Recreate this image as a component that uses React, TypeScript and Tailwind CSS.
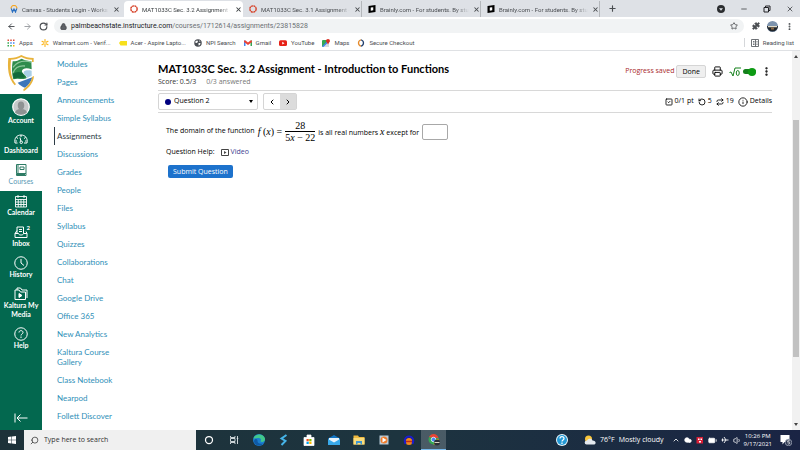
import type { ReactNode } from 'react';
import {
  ArrowLeft,
  ArrowRight,
  BatteryFull,
  ChevronLeft,
  ChevronRight,
  ChevronUp,
  Cloud,
  Info,
  Lock,
  Minus,
  MoreVertical,
  Plus,
  Printer,
  Puzzle,
  Repeat,
  RotateCcw,
  RotateCw,
  Search,
  SquareCheck,
  Star,
  Volume1,
  X,
} from 'lucide-react';

const tabs = [
  { title: 'Canvas - Students Login - Works', icon: 'workday' },
  { title: 'MAT1033C Sec. 3.2 Assignment -', icon: 'canvas', active: true },
  { title: 'MAT1033C Sec. 3.1 Assignment -', icon: 'canvas' },
  { title: 'Brainly.com - For students. By stu', icon: 'brainly' },
  { title: 'Brainly.com - For students. By stu', icon: 'brainly' },
];

const courseLinks = [
  'Modules',
  'Pages',
  'Announcements',
  'Simple Syllabus',
  'Assignments',
  'Discussions',
  'Grades',
  'People',
  'Files',
  'Syllabus',
  'Quizzes',
  'Collaborations',
  'Chat',
  'Google Drive',
  'Office 365',
  'New Analytics',
  'Kaltura Course Gallery',
  'Class Notebook',
  'Nearpod',
  'Follett Discover',
];

function TabIcon({ name }: { name: string }) {
  if (name === 'workday') {
    return (
      <svg viewBox="0 0 16 16" className="size-2 shrink-0" fill="none">
        <path d="M2 7a6 6 0 0 1 12 0" stroke="#f5a623" strokeWidth="2.4" />
        <path d="M2.5 7l2.5 7 3-6 3 6 2.5-7" stroke="#2a6fc0" strokeWidth="2.4" />
      </svg>
    );
  }
  if (name === 'canvas') {
    return (
      <svg viewBox="0 0 16 16" className="size-2 shrink-0" fill="none">
        <circle cx="8" cy="8" r="6.3" stroke="#d64027" strokeWidth="2.8" strokeDasharray="4.15 0.8" />
      </svg>
    );
  }
  return (
    <svg viewBox="0 0 16 16" className="size-2 shrink-0">
      <path d="M1 2l14-2v14L1 16z" fill="#000" />
      <path d="M5.5 5.2l5-.7v6.2l-5 .7z" fill="#fff" />
    </svg>
  );
}

function TabStrip() {
  return (
    <div className="flex h-[17px] items-end bg-[#dee1e6] text-[6px] text-[#4a4d51]">
      {tabs.map((tab, i) => (
        <div
          key={i}
          className={
            tab.active
              ? 'flex h-4 w-[119px] items-center gap-1 rounded-t bg-white pr-1 pl-1.5 text-[#3c4043]'
              : i === 0
                ? 'flex h-4 w-[124px] items-center gap-1 pr-1 pl-2.5'
                : 'flex h-4 w-[119px] items-center gap-1 pr-1 pl-1.5 shadow-[inset_-1px_0_0_#b4b7bb]'
          }
        >
          <TabIcon name={tab.icon} />
          <span className="flex-1 mask-r-from-85% whitespace-nowrap">{tab.title}</span>
          <button aria-label="Close tab" className="shrink-0">
            <X className="size-[7px]" strokeWidth={3.5} />
          </button>
        </div>
      ))}
      <button aria-label="New tab" className="mb-1 ml-2">
        <Plus className="size-[9px]" strokeWidth={3} />
      </button>
      <div className="ml-auto flex h-4 items-center gap-[15px] pr-1.5 text-[#202124]">
        <svg viewBox="0 0 16 16" className="size-2">
          <circle cx="8" cy="8" r="8" fill="#2b2d30" />
          <path d="M4 6.5h8l-4 5z" fill="#dee1e6" />
        </svg>
        <button aria-label="Minimize">
          <Minus className="size-2" />
        </button>
        <button aria-label="Restore">
          <svg viewBox="0 0 16 16" className="size-2" fill="none" stroke="currentColor" strokeWidth="2">
            <path d="M2 5h9v9H2zM5 5V2h9v9h-3" />
          </svg>
        </button>
        <button aria-label="Close window">
          <X className="size-2" />
        </button>
      </div>
    </div>
  );
}

function AddressBar() {
  return (
    <div className="flex h-[18px] items-center bg-white pr-1.5 pl-[7px] text-[#4a4d51]">
      <div className="flex items-center gap-[7px]">
        <button aria-label="Back">
          <ArrowLeft className="size-[9px]" strokeWidth={2.5} />
        </button>
        <button aria-label="Forward" className="text-[#9a9da1]">
          <ArrowRight className="size-[9px]" strokeWidth={2.5} />
        </button>
        <button aria-label="Reload">
          <RotateCw className="size-[9px]" strokeWidth={3} />
        </button>
      </div>
      <div className="ml-1.5 flex h-[14px] flex-1 items-center gap-1 rounded-full bg-[#f1f3f4] px-1.5">
        <Lock className="size-[7px] fill-[#5f6368]" strokeWidth={3} />
        <span className="flex-1 text-[7px] text-[#6b6f73]">
          <span className="text-[#202124]">palmbeachstate.instructure.com</span>/courses/1712614/assignments/23815828
        </span>
        <Star className="size-2" strokeWidth={2.5} />
      </div>
      <div className="ml-2 flex items-center gap-[7px]">
        <Puzzle className="size-2 fill-[#4a4d51]" />
        <svg viewBox="0 0 22 22" className="size-[11px]">
          <circle cx="11" cy="11" r="11" fill="#7d93ad" />
          <path d="M0 10h22a11 11 0 0 1-22 0z" fill="#20262c" />
          <path d="M2 10h18v2.5H2z" fill="#e1dcc9" />
          <path d="M8 13h6v4H8z" fill="#8a6a48" />
        </svg>
        <MoreVertical className="size-[9px]" strokeWidth={3} />
      </div>
    </div>
  );
}

function Bookmark({ label, children }: { label: string; children: ReactNode }) {
  return (
    <a href="#" className="flex items-center gap-1 whitespace-nowrap">
      <svg viewBox="0 0 16 16" className="size-2 shrink-0">
        {children}
      </svg>
      {label}
    </a>
  );
}

function BookmarksBar() {
  return (
    <div className="flex h-4 items-center gap-2 border-b border-[#dfe1e4] bg-white pr-1.5 pl-[7px] text-[6px] text-[#4a4d51]">
      <Bookmark label="Apps">
        <path d="M1 1h3v3H1zM6.500 1h3v3h-3zM12 1h3v3h-3z" fill="#dd4b39" />
        <path d="M1 6.500h3v3H1z" fill="#34a853" />
        <path d="M6.500 6.500h3v3h-3zM12 6.500h3v3h-3z" fill="#4285f4" />
        <path d="M1 12h3v3H1zM6.500 12h3v3h-3z" fill="#34a853" />
        <path d="M12 12h3v3h-3z" fill="#f5b400" />
      </Bookmark>
      <Bookmark label="Walmart.com - Verif...">
        <path
          d="M8 1v4.500M8 10.500V15M2 4.500l3.800 2.200M10.200 9.300l3.800 2.200M2 11.500l3.800-2.200M10.200 6.700L14 4.500"
          stroke="#fbb51b"
          strokeWidth="2.2"
          strokeLinecap="round"
        />
      </Bookmark>
      <Bookmark label="Acer - Aspire Lapto...">
        <path d="M0 8l3-4h13v9H3z" fill="#f7e01c" />
      </Bookmark>
      <Bookmark label="NPI Search">
        <circle cx="8" cy="8" r="7.5" fill="#4a4e54" />
        <path d="M3 4l4-1 1 3-3 2-2 0zM9 8l4 0-1 4-3 1zM10 2.500l3 2-2 1z" fill="#fff" />
      </Bookmark>
      <Bookmark label="Gmail">
        <path d="M0 3h3v11H0z" fill="#4285f4" />
        <path d="M13 3h3v11h-3z" fill="#34a853" />
        <path d="M0 3h3l5 4 5-4h3v3l-8 6-8-6z" fill="#ea4335" />
      </Bookmark>
      <Bookmark label="YouTube">
        <rect y="2.5" width="16" height="11.5" rx="3" fill="#e62117" />
        <path d="M6.500 5.500v5.500l4.500-2.750z" fill="#fff" />
      </Bookmark>
      <Bookmark label="Maps">
        <rect x="0" y="2" width="14" height="14" rx="2" fill="#34a853" />
        <path d="M1 16L14 5v11z" fill="#d5dbe0" />
        <path d="M0 15L12 3l2 2L3 16z" fill="#4285f4" />
        <path d="M12 0a4 4 0 0 1 4 4c0 2.500-3 3.500-4 7-1-3.500-4-4.500-4-7a4 4 0 0 1 4-4z" fill="#d93025" />
      </Bookmark>
      <Bookmark label="Secure Checkout">
        <path d="M8 1.500C4 3 3 5.500 3 8s1 5 5 6.500" fill="none" stroke="#e58a2b" strokeWidth="2.6" />
        <path d="M8 1.500c4 1.500 5 4 5 6.500s-1 5-5 6.500" fill="none" stroke="#23406e" strokeWidth="2.6" />
      </Bookmark>
      <a href="#" className="ml-auto flex items-center gap-1 border-l border-[#d5d7da] pl-1.5">
        <svg viewBox="0 0 16 16" className="size-2" fill="none" stroke="#5f6368" strokeWidth="1.8">
          <path d="M1 1h14v14H1zM4 5h3M4 8h3M4 11h3M9 1v14M11 5h2M11 8h2M11 11h2" />
        </svg>
        Reading list
      </a>
    </div>
  );
}

function NavItem({ label, active, children }: { label: string; active?: boolean; children: ReactNode }) {
  return (
    <a
      href="#"
      className={
        active
          ? 'flex flex-col items-center bg-white pt-[3px] pb-[5px] text-center text-[#5a9ab5]'
          : 'flex flex-col items-center pt-[3px] pb-[5px] text-center font-bold text-white'
      }
    >
      <svg
        viewBox="0 0 28 28"
        className={active ? 'size-[14px] text-[#2d7b64]' : 'size-[14px]'}
        fill="none"
        stroke="currentColor"
        strokeWidth="2"
      >
        {children}
      </svg>
      {label}
    </a>
  );
}

function GlobalNav() {
  return (
    <nav className="flex w-[42px] shrink-0 flex-col bg-[#03684f] text-[7px] leading-[9px]">
      <div className="flex h-[43px] items-center justify-center bg-white">
        <svg viewBox="0 0 84 114" className="h-[38px] w-7">
          <path
            d="M4 12c14 1 28-2 39-9 10 6 22 9 37 9v12h-5v-7c-12 0-23-3-32-8-9 5-20 8-31 8-3 30-1 54 15 74l-4 3C3 72 1 42 4 12z"
            fill="#e8b33b"
          />
          <path d="M17 22c10 0 19-3 27-8 9 5 18 7 29 8l1 24c-14-6-27-4-29 4-2 9 14 12 14 22-12 8-22-2-40 4C14 60 14 40 17 22z" fill="#2e8c4c" />
          <path d="M18 40c12-16 32-22 55-16M18 56c6-14 20-22 36-20" fill="none" stroke="#8cc79a" strokeWidth="4" />
          <path d="M18 60c8-7 18-8 28-4l8 14c-10 4-22-2-34 4z" fill="#116a3b" />
          <path d="M50 54c2-5 12-6 24-4v16c-6 2-12 4-12 8 0-8-14-12-12-20z" fill="#a9cfe6" />
          <path d="M32 86l44-16c-3 14-12 24-22 31-8-3-16-8-22-15z" fill="#3c76ba" />
          <path d="M81 66c-2 20-14 35-31 46l-1-6c14-10 24-23 27-38z" fill="#e8b33b" />
        </svg>
      </div>
      <a href="#" className="flex flex-col items-center pt-1 pb-1 font-bold text-white">
        <svg viewBox="0 0 36 36" className="size-[18px]">
          <circle cx="18" cy="18" r="16.5" fill="#c6c9ca" stroke="#fff" strokeWidth="2.5" />
          <ellipse cx="18" cy="15" rx="6.5" ry="8" fill="#8e9293" />
          <path d="M6 29c2-6 7-7 12-7s10 1 12 7c-7 6-17 6-24 0z" fill="#8e9293" />
        </svg>
        Account
      </a>
      <NavItem label="Dashboard">
        <path d="M7 22H2C0 12 6 6 14 6s14 6 12 16h-6M14 6v4M5 11l3 2M23 11l-3 2M3 18h3M25 18h-3" />
        <path d="M12 11l2 8" />
        <circle cx="14.5" cy="20.5" r="2.5" />
      </NavItem>
      <NavItem label="Courses" active>
        <path d="M5 3h19v18H5zM5 21v4h19M24 21v4M8 3v18M12 8h8v5h-8zM6 23h16" />
      </NavItem>
      <NavItem label="Calendar">
        <path d="M3 5h22v21H3zM3 11h22M8 2v6M20 2v6M3 16h22M3 21h22M8.500 11v15M14 11v15M19.500 11v15" strokeWidth="1.8" />
      </NavItem>
      <div className="relative">
        <NavItem label="Inbox">
          <path d="M6 17V4h13v13M2 17h7c0 4 10 4 10 0h7v8H2zM2 17l4-6M26 17l-2-4M10 9h6M10 13h6" />
        </NavItem>
        <span className="absolute top-0.5 right-3 text-[6px] leading-[8px] font-bold text-white">2</span>
      </div>
      <NavItem label="History">
        <circle cx="14" cy="14" r="12.5" />
        <path d="M14 6v8l6 5" />
      </NavItem>
      <NavItem label="Kaltura My Media">
        <path d="M2 25V6h8l3 4h10v15zM6 6V2h7l3 4h10v16" />
        <path d="M10 13l6 4-6 4z" fill="currentColor" />
      </NavItem>
      <NavItem label="Help">
        <circle cx="14" cy="14" r="12.5" />
        <path d="M10 11c0-5 8-5 8 0 0 3-4 3-4 6M14 19v3" />
      </NavItem>
      <button aria-label="Collapse navigation" className="mx-auto mt-auto mb-[7px] text-white">
        <svg viewBox="0 0 28 20" className="h-[10px] w-[14px]" fill="none" stroke="currentColor" strokeWidth="2">
          <path d="M2 1v18M27 10H6M13 3l-7 7 7 7" />
        </svg>
      </button>
    </nav>
  );
}

function CourseNav() {
  return (
    <nav className="w-[100px] shrink-0 pt-1 pl-3 text-[8px] leading-[10px] text-[#2f8fb8]">
      <ul>
        {courseLinks.map((link) => (
          <li key={link}>
            <a
              href="#"
              className={
                link === 'Assignments'
                  ? 'block border-l border-[#2d3b45] py-1 pr-6 pl-0.5 text-[#2d3b45]'
                  : 'block border-l border-transparent py-1 pr-6 pl-0.5'
              }
            >
              {link}
            </a>
          </li>
        ))}
      </ul>
    </nav>
  );
}

function Assignment() {
  return (
    <main className="min-w-0 flex-1 pt-3 pr-5 pl-4 font-['Open_Sans',sans-serif] text-[7px] text-[#333]">
      <div className="flex items-start justify-between">
        <div>
          <h1 className="font-['Lato',sans-serif] text-[11px] leading-3 font-bold text-black">
            MAT1033C Sec. 3.2 Assignment - Introduction to Functions
          </h1>
          <p className="flex gap-2.5 leading-[13px]">
            <span>Score: 0.5/3</span>
            <span className="text-[#777]">0/3 answered</span>
          </p>
        </div>
        <div className="flex items-center pt-0.5">
          <span className="text-[#a8282c]">Progress saved</span>
          <button className="ml-0.5 h-[13px] rounded-xs border border-[#d5d5d5] bg-[#efefef] px-[5px] leading-[10px] text-black">
            Done
          </button>
          <button aria-label="Print" className="ml-1.5 text-black">
            <Printer className="size-[11px]" />
          </button>
          <label className="ml-1.5 flex items-center text-[#14801b]">
            <svg viewBox="0 0 24 20" className="h-[10px] w-3" fill="none" stroke="currentColor" strokeWidth="2">
              <path d="M1 11l3-1 4 8L12 2h12" />
              <ellipse cx="17.5" cy="12" rx="3" ry="5" />
            </svg>
            <input type="checkbox" defaultChecked aria-label="Equation editor" className="peer sr-only" />
            <span className="ml-0.5 flex h-[5px] w-[13px] items-center justify-end rounded-full bg-[#14801b]">
              <span className="size-2 shrink-0 rounded-full bg-[#0d9b14]" />
            </span>
          </label>
          <button aria-label="More options" className="ml-[5px] text-black">
            <MoreVertical className="size-[11px]" strokeWidth={3} />
          </button>
        </div>
      </div>

      {/* Question picker */}
      <div className="mt-0.5 flex h-[23px] items-center justify-between border-y border-[#d8d8d8]">
        <div className="flex items-center gap-[5px]">
          <div className="relative">
            <select
              aria-label="Question"
              className="h-[17px] w-[100px] appearance-none rounded-xs border border-[#d5d5d5] bg-white pl-[15px] text-[7px] text-black"
            >
              <option>Question 2</option>
            </select>
            <span className="pointer-events-none absolute inset-0 flex items-center justify-between pr-[5px] pl-[7px]">
              <span className="size-1.5 rounded-full bg-[#00007f]" />
              <svg viewBox="0 0 8 6" className="h-[3px] w-1">
                <path d="M0 0h8L4 6z" fill="#000" />
              </svg>
            </span>
          </div>
          <div className="flex h-[17px] rounded-xs border border-[#d5d5d5] text-black">
            <button aria-label="Previous question" className="flex w-4 items-center justify-center">
              <ChevronLeft className="size-2" strokeWidth={3} />
            </button>
            <button aria-label="Next question" className="flex w-4 items-center justify-center bg-[#dcdcdc]">
              <ChevronRight className="size-2" strokeWidth={3} />
            </button>
          </div>
        </div>
        <div className="flex items-center gap-1 text-black">
          <span className="flex items-center gap-0.5">
            <SquareCheck className="size-2" strokeWidth={2.5} />
            0/1 pt
          </span>
          <span className="flex items-center gap-0.5">
            <RotateCcw className="size-2" strokeWidth={2.5} />5
          </span>
          <span className="flex items-center gap-0.5">
            <Repeat className="size-2" strokeWidth={2.5} />
            19
          </span>
          <button className="flex items-center gap-0.5">
            <Info className="size-[10px]" strokeWidth={2} />
            Details
          </button>
        </div>
      </div>

      {/* Question */}
      <div className="flex flex-col items-start px-2 pt-[7px] text-black">
        <label className="flex items-center gap-[3px]">
          The domain of the function
          <span className="flex items-center gap-[3px] font-['Liberation_Serif',serif] text-[10px]">
            <span>
              <i>f</i> (<i>x</i>) =
            </span>
            <span className="flex flex-col text-center leading-[11px]">
              <span>28</span>
              <span className="border-t border-black whitespace-nowrap">
                5<i>x</i> − 22
              </span>
            </span>
          </span>
          <span>
            is all real numbers <i className="font-['Liberation_Serif',serif] text-[10px]">x</i> except for
          </span>
          <input type="text" className="h-4 w-[26px] rounded-xs border border-[#a8a8a8] px-0.5" />
        </label>
        <p className="mt-1 flex items-center leading-[10px]">
          Question Help:
          <a href="#" className="ml-1.5 flex items-center gap-0.5 text-[#404090]">
            <svg viewBox="0 0 16 14" className="h-[7px] w-2" fill="none" stroke="#444" strokeWidth="2">
              <path d="M1 1h14v12H1z" />
              <path d="M6 4v6l5-3z" fill="#444" stroke="none" />
            </svg>
            Video
          </a>
        </p>
        <button className="mt-2 ml-0.5 h-[13px] rounded-xs bg-[#1d72cc] px-[5px] text-[7px] leading-[13px] text-white">
          Submit Question
        </button>
      </div>
    </main>
  );
}

function Scrollbar() {
  return (
    <div className="flex w-2 shrink-0 flex-col items-center bg-[#f1f1f1] py-1">
      <svg viewBox="0 0 8 6" className="h-[3px] w-1">
        <path d="M0 6h8L4 0z" fill="#444" />
      </svg>
      <div className="flex w-1.5 flex-1 flex-col">
        <div className="flex-[17%]" />
        <div className="flex-[65%] bg-[#c1c1c1]" />
        <div className="flex-[18%]" />
      </div>
      <svg viewBox="0 0 8 6" className="h-[3px] w-1">
        <path d="M0 0h8L4 6z" fill="#444" />
      </svg>
    </div>
  );
}

function AppButton({ label, active, children }: { label: string; active?: boolean; children: ReactNode }) {
  return (
    <button
      aria-label={label}
      className={
        active
          ? 'flex h-5 w-[25px] items-center justify-center border-b border-[#76b9ed] bg-white/20'
          : 'flex h-5 w-[25px] items-center justify-center'
      }
    >
      <svg viewBox="0 0 24 24" className="size-3">
        {children}
      </svg>
    </button>
  );
}

function Taskbar() {
  return (
    <footer className="flex h-5 shrink-0 items-center bg-linear-to-r from-[#1d3239] via-[#1d343f] to-[#1a2444] text-[7px] text-white">
      <button aria-label="Start" className="flex w-6 justify-center">
        <svg viewBox="0 0 16 16" className="size-2" fill="#fff">
          <path d="M0 2l7-1v6.500H0zM8 1l8-1v7.500H8zM0 8.500h7V15l-7-1zM8 8.500h8V16l-8-1z" />
        </svg>
      </button>
      <label className="flex h-5 w-[172px] items-center gap-[5px] bg-[#f0f0f0] px-1.5 text-[#333]">
        <Search className="size-[9px] -scale-x-100" />
        <input
          type="text"
          aria-label="Search"
          placeholder="Type here to search"
          className="min-w-0 flex-1 text-[7px] placeholder:text-[#333]"
        />
      </label>
      <div className="flex items-center">
        <AppButton label="Cortana">
          <circle cx="12" cy="12" r="7" fill="none" stroke="#fff" strokeWidth="2.5" />
        </AppButton>
        <AppButton label="Task view">
          <path d="M5 4v3h9V4M5 20v-3h9v3M5 9h9v6H5zM19 4v16M17.500 9h3" fill="none" stroke="#dfe5e8" strokeWidth="1.8" />
        </AppButton>
        <AppButton label="Edge">
          <circle cx="12" cy="12" r="12" fill="#1b7fd0" />
          <path d="M1 9C4-2 21-2 24 9c1 6-5 8-9 6 3-5-1-8-5-7-4 0-7 1-9 1z" fill="#41c88c" />
          <path d="M9 12c-1 6 4 9 11 7-5 7-17 5-18-5 2-5 5-5 7-2z" fill="#0f5aa6" />
        </AppButton>
        <AppButton label="Stream">
          <path d="M17 2L7 9l8 5-8 8" fill="none" stroke="#46b4e8" strokeWidth="4" />
        </AppButton>
        <AppButton label="Store">
          <path d="M2 7h20v16H2zM8 7V2h8v5" fill="#fff" stroke="#fff" strokeWidth="1.5" />
          <path d="M7 10h4.500v4.500H7z" fill="#f25022" />
          <path d="M12.500 10H17v4.500h-4.500z" fill="#7fba00" />
          <path d="M7 15.500h4.500V20H7z" fill="#00a4ef" />
          <path d="M12.500 15.500H17V20h-4.500z" fill="#ffb900" />
        </AppButton>
        <AppButton label="Mail">
          <path d="M0 9l12-7 12 7v13H0z" fill="#1275c4" />
          <path d="M2 8h20v6l-10 5L2 14z" fill="#e8f4fc" />
          <path d="M0 10l12 7 12-7v12H0z" fill="#38a9ea" />
        </AppButton>
        <AppButton label="File Explorer">
          <path d="M1 3h9l2 3h11v15H1z" fill="#f0b93f" />
          <path d="M1 8h22v13H1z" fill="#fbdc7a" />
          <path d="M6 14h12v7h-3v-3H9v3H6z" fill="#3f97d3" />
        </AppButton>
        <AppButton label="Media Player">
          <path d="M3 3h18v18H3z" fill="#b9cbd8" />
          <circle cx="12" cy="12" r="7" fill="#ee7d2c" />
          <path d="M9 7v10l8-5z" fill="#fff" />
        </AppButton>
        <AppButton label="Audacity">
          <ellipse cx="12" cy="15" rx="7" ry="7" fill="#ef8a1e" />
          <path d="M6 15h12" stroke="#c02a1d" strokeWidth="3" />
          <path d="M5 20C-3 0 27 0 19 20" fill="none" stroke="#1c1ccc" strokeWidth="4" />
        </AppButton>
        <AppButton label="Chrome" active>
          <circle cx="11" cy="11" r="10" fill="#34a853" />
          <path d="M2 6C6-2 18-2 21 8H11z" fill="#ea4335" />
          <path d="M21 9c1 7-4 12-10 12l4-9z" fill="#fbbc05" />
          <circle cx="11" cy="11" r="4.5" fill="#4285f4" stroke="#fff" strokeWidth="1.5" />
          <circle cx="18" cy="17" r="6" fill="#2b3036" />
          <path d="M13 16h10v2H13z" fill="#d8d2c0" />
        </AppButton>
      </div>
      <div className="ml-auto flex items-center pr-2">
        <svg viewBox="0 0 24 24" className="size-3">
          <circle cx="12" cy="12" r="12" fill="#e9f6fc" />
          <circle cx="12" cy="12" r="10" fill="#2399d6" />
          <path d="M8 9c0-5 8-5 8 0 0 3-4 3-4 6M12 17v3" fill="none" stroke="#fff" strokeWidth="2.5" />
        </svg>
        <button className="ml-4 flex items-center gap-1 whitespace-nowrap">
          <svg viewBox="0 0 24 20" className="h-[10px] w-3">
            <circle cx="9" cy="8" r="7" fill="#f9c63c" />
            <path d="M5 19a4 4 0 0 1 1-8c2-5 10-5 11 0 8 0 8 8 2 8z" fill="#e4e9ef" />
          </svg>
          <span>76°F</span>
          <span>Mostly cloudy</span>
        </button>
        <div className="ml-2 flex items-center gap-1">
          <ChevronUp className="size-2" strokeWidth={2.5} />
          <Cloud className="size-2 fill-white" />
          <svg viewBox="0 0 16 16" className="size-2">
            <path d="M1 2h13v13H1z" fill="#d91f36" />
            <path d="M4 5h3v3H4zM9 5h3v3H9zM6 10h4v3H6z" fill="#fff" />
          </svg>
          <BatteryFull className="size-[9px] fill-white" />
          <svg viewBox="0 0 16 16" className="size-2" fill="none" stroke="#fff" strokeWidth="1.8">
            <path d="M1 8h14M6 2l4 6-4 6M3 5v6" />
          </svg>
          <Volume1 className="size-[9px]" />
        </div>
        <div className="ml-0.5 text-center text-[6px] leading-[8px]">
          <div>10:26 PM</div>
          <div>9/17/2021</div>
        </div>
        <button aria-label="Notifications" className="ml-2">
          <svg viewBox="0 0 24 24" className="size-3">
            <path d="M1 2h18v14H9l-4 5v-5H1z" fill="#fff" />
            <circle cx="17" cy="17" r="6.5" fill="#2b3550" stroke="#a9b1c2" strokeWidth="1.5" />
            <path d="M19.500 13.500h-4v3c3-1 4 0 4 1.500 0 2-2.500 2.500-4 1.500" fill="none" stroke="#fff" strokeWidth="1.5" />
          </svg>
        </button>
      </div>
    </footer>
  );
}

export default function App() {
  return (
    <div className="flex h-screen flex-col overflow-hidden bg-white font-['Open_Sans',sans-serif]">
      <header className="font-['Roboto',sans-serif]">
        <TabStrip />
        <AddressBar />
        <BookmarksBar />
      </header>
      <div className="flex min-h-0 flex-1 font-['Lato',sans-serif]">
        <GlobalNav />
        <CourseNav />
        <Assignment />
        <Scrollbar />
      </div>
      <Taskbar />
    </div>
  );
}
